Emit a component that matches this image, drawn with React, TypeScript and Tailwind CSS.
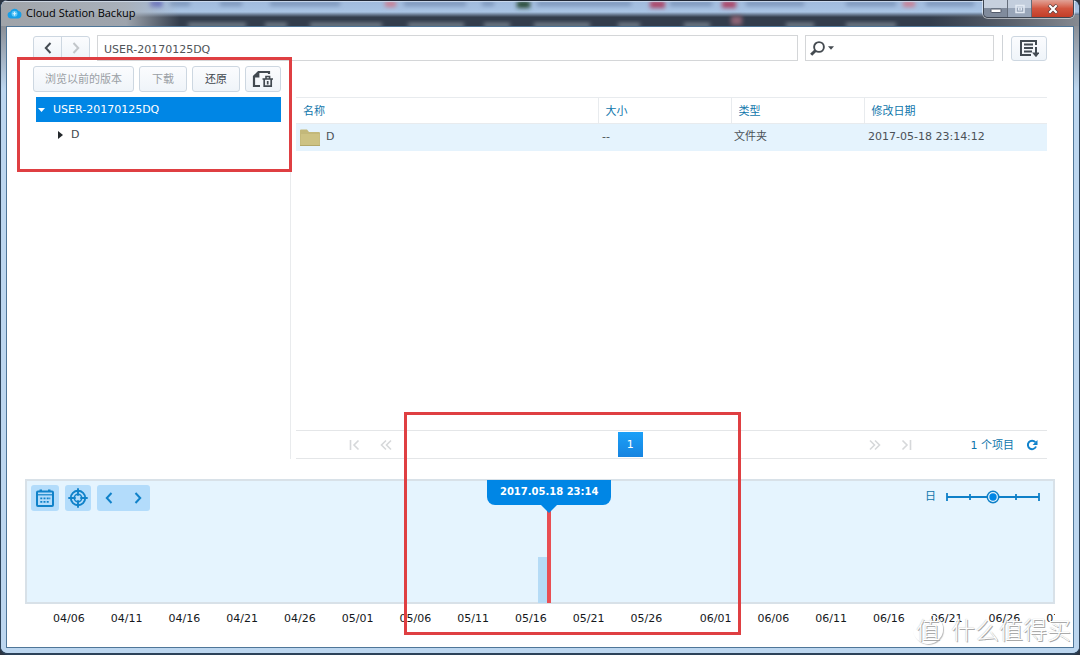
import type { ReactNode } from "react";

const axis = [
  ["04/06", 20], ["04/11", 20], ["04/16", 20], ["04/21", 20], ["04/26", 20],
  ["05/01", 20], ["05/06", 20], ["05/11", 20], ["05/16", 20], ["05/21", 20],
  ["05/26", 24], ["06/01", 20], ["06/06", 20], ["06/11", 20], ["06/16", 20],
  ["06/21", 20], ["06/26", 20], ["07/01", 3],
] as const;

const selectedPercent = 50.9;

function Chevron({ left = false, color }: { left?: boolean; color: string }) {
  return (
    <svg width="8" height="12" viewBox="0 0 8 12" fill="none" stroke={color} strokeWidth="2">
      <path d={left ? "M6.5 1 1.8 6l4.7 5" : "M1.5 1l4.7 5-4.7 5"} />
    </svg>
  );
}

function PagerIcon({ kind }: { kind: "first" | "prev" | "next" | "last" }) {
  const paths = {
    first: "M1.5 1v10M9.5 1.5 5 6l4.5 4.5",
    prev: "M6 1.5 1.5 6 6 10.5M11 1.5 6.5 6l4.5 4.5",
    next: "M1 1.5 5.5 6 1 10.5M6 1.5 10.5 6 6 10.5",
    last: "M2.5 1.5 7 6l-4.5 4.5M10.5 1v10",
  };
  return (
    <svg width="12" height="12" viewBox="0 0 12 12" fill="none" stroke="#d6d8da" strokeWidth="1.6">
      <path d={paths[kind]} />
    </svg>
  );
}

function ToolButton({ children, disabled = false, label }: { children: ReactNode; disabled?: boolean; label?: string }) {
  return (
    <button
      aria-label={label}
      disabled={disabled}
      className="flex h-[26px] min-w-9 items-center justify-center rounded-[3px] border border-[#cdd7e1] bg-linear-to-b from-[#fbfcfe] to-[#eff4f9] text-[#3f464d] disabled:text-[#9a9fa5]"
    >
      {children}
    </button>
  );
}

function TitleBar() {
  return (
    <header className="relative flex h-[26px] shrink-0 items-start overflow-hidden bg-linear-to-b from-[#9fb9dc] from-0% via-[#a9c4e4] via-46% to-[#333d4c] to-66%">
      <svg className="absolute inset-0 h-full w-full" preserveAspectRatio="none" viewBox="0 0 1080 26" aria-hidden="true">
        <defs>
          <filter id="soft" x="-20%" y="-60%" width="140%" height="220%"><feGaussianBlur stdDeviation="2" /></filter>
          <linearGradient id="glassLeft" x1="0" x2="1" y1="0" y2="0">
            <stop offset="0" stopColor="#a0a4a9" />
            <stop offset="0.7" stopColor="#a9afb7" stopOpacity="0.9" />
            <stop offset="1" stopColor="#a9afb7" stopOpacity="0" />
          </linearGradient>
          <linearGradient id="glassRight" x1="0" x2="1" y1="0" y2="0">
            <stop offset="0" stopColor="#70757d" stopOpacity="0" />
            <stop offset="1" stopColor="#878b92" />
          </linearGradient>
        </defs>
        <g filter="url(#soft)" fill="#7d96bb">
          <rect x="170" y="1" width="20" height="5" /><rect x="220" y="1" width="22" height="5" />
          <rect x="270" y="1" width="70" height="5" /><rect x="404" y="1" width="62" height="5" />
          <rect x="482" y="1" width="12" height="5" /><rect x="537" y="1" width="94" height="5" />
          <rect x="670" y="1" width="42" height="5" /><rect x="746" y="1" width="58" height="5" />
          <rect x="846" y="1" width="50" height="5" /><rect x="926" y="1" width="48" height="5" />
          <rect x="150" y="0" width="12" height="7" fill="#4d56c0" />
          <rect x="385" y="1" width="11" height="6" fill="#c98094" />
          <rect x="517" y="1" width="13" height="7" fill="#2c4b39" />
          <rect x="650" y="1" width="15" height="7" fill="#ac4566" />
          <rect x="722" y="1" width="14" height="7" fill="#ac4566" />
          <rect x="903" y="1" width="12" height="6" fill="#c98094" />
          <rect x="731" y="16" width="11" height="9" fill="#8c6475" />
        </g>
        <g filter="url(#soft)" fill="#7d8793">
          <rect x="188" y="23" width="58" height="4" /><rect x="265" y="23" width="22" height="4" />
          <rect x="310" y="23" width="72" height="4" /><rect x="408" y="23" width="56" height="4" />
          <rect x="484" y="23" width="26" height="4" /><rect x="534" y="23" width="56" height="4" />
          <rect x="618" y="23" width="22" height="4" /><rect x="684" y="23" width="26" height="4" />
          <rect x="786" y="23" width="28" height="4" /><rect x="846" y="23" width="50" height="4" />
        </g>
        <rect width="180" height="26" fill="url(#glassLeft)" />
        <rect x="930" y="15" width="150" height="11" fill="url(#glassRight)" />
        <rect width="1080" height="1" fill="#202735" />
        <rect y="1" width="1080" height="1" fill="#dbe7f5" fillOpacity="0.7" />
      </svg>
      <div className="relative flex h-full flex-1 items-center gap-1 pl-[7px]">
        <svg width="15" height="12" viewBox="0 0 14 12" aria-hidden="true">
          <path d="M3.5 11.5a3.4 3.4 0 0 1-.8-6.7A4.6 4.6 0 0 1 11 4a3.8 3.8 0 0 1-.6 7.5Z" fill="#169fe8" />
          <circle cx="7" cy="6.7" r="3" fill="#5cc6f7" />
          <path d="M7 4.8v3.8M5.2 6.7h3.6" stroke="#d9f3ff" />
        </svg>
        <h1 className="font-['Open_Sans','Noto_Sans',sans-serif] text-[11px] leading-4 text-black">Cloud Station Backup</h1>
      </div>
      <div className="relative mr-1.5 flex h-[18px] overflow-hidden rounded-b-[5px] border border-t-0 border-[#3e4652] shadow-[0_0_0_1px_#ffffff80]">
        <button aria-label="Minimize" className="flex w-6 items-center justify-center border-r border-[#646d7b] bg-linear-to-b from-[#c6d0de] from-45% to-[#808b9c] to-50%">
          <svg width="12" height="10" viewBox="0 0 12 10"><rect x="1" y="5" width="10" height="3.5" rx=".5" fill="#fff" stroke="#535b6b" /></svg>
        </button>
        <button aria-label="Maximize" className="flex w-6 items-center justify-center border-r border-[#646d7b] bg-linear-to-b from-[#c3cedd] from-45% to-[#98a5b8] to-50%">
          <svg width="12" height="10" viewBox="0 0 12 10" fill="none" stroke="#e3eaf3" strokeWidth="1.5"><rect x="2" y="1.5" width="8" height="7" /><rect x="4.5" y="4" width="3" height="2" strokeWidth="1" /></svg>
        </button>
        <button aria-label="Close" className="flex w-[41px] items-center justify-center bg-linear-to-b from-[#e0a297] from-0% via-[#d2553f] via-50% to-[#c23d27] to-100%">
          <svg width="12" height="10" viewBox="0 0 12 10"><path d="M2 1l8 8M10 1 2 9" stroke="#5d3a3a" strokeWidth="3.6" /><path d="M2.3 1.3l7.4 7.4M9.7 1.3 2.3 8.7" stroke="#fff" strokeWidth="2.2" /></svg>
        </button>
      </div>
    </header>
  );
}

function NavigationBar() {
  return (
    <div className="flex h-[26px] shrink-0 items-center pl-[26px] pr-[26px]">
      <div className="flex h-6 w-[57px] rounded-[3px] border border-[#cdd7e1] bg-linear-to-b from-[#fbfcfe] to-[#eff4f9]">
        <button aria-label="后退" className="flex flex-1 items-center justify-center border-r border-[#cdd7e1]"><Chevron left color="#454c53" /></button>
        <button aria-label="前进" disabled className="flex flex-1 items-center justify-center"><Chevron color="#c2c6ca" /></button>
      </div>
      <input aria-label="路径" defaultValue="USER-20170125DQ" className="ml-[7px] h-[26px] min-w-0 flex-1 border border-[#d4d6d8] bg-white px-1.5 pt-0.5 text-[#505458] outline-none" />
      <div className="ml-[7px] flex h-[26px] w-[189px] items-center border border-[#d4d6d8] pl-1">
        <button aria-label="搜索选项" className="flex items-center gap-0.5">
          <svg width="16" height="16" viewBox="0 0 16 16" fill="none" stroke="#454b51">
            <circle cx="9" cy="7" r="4.9" strokeWidth="1.9" /><path d="M5.5 10.5 1.2 14.8" strokeWidth="3" />
          </svg>
          <svg width="6" height="4" viewBox="0 0 6 4"><path d="M0 .3h6L3 3.7Z" fill="#454b51" /></svg>
        </button>
        <input aria-label="搜索" className="h-full min-w-0 flex-1 px-1 outline-none" />
      </div>
      <div className="mx-2 h-[26px] w-px bg-[#cfd3d7]" />
      <button aria-label="任务列表" className="flex h-[25px] w-9 items-center justify-center rounded-[3px] border border-[#cdd7e1] bg-linear-to-b from-[#fbfcfe] to-[#eff4f9]">
        <svg width="20" height="19" viewBox="0 0 20 19" fill="none" stroke="#424a52" strokeWidth="2">
          <path d="M12 16H2V2h15v4" /><path d="M5 5.5h9M5 9h9M5 12.5h8" strokeWidth="1.8" />
          <path d="M17 8v7" /><path d="M13 13.5h7.5L17 18.3Z" fill="#424a52" stroke="none" />
        </svg>
      </button>
    </div>
  );
}

function Sidebar() {
  return (
    <aside className="relative w-[284px] shrink-0 border-r border-[#e9ebed] pt-[5px]">
      <div className="flex gap-[5px] pl-[26px]">
        <ToolButton disabled><span className="px-[11px] pt-0.5">浏览以前的版本</span></ToolButton>
        <ToolButton disabled><span className="px-3 pt-0.5">下载</span></ToolButton>
        <ToolButton><span className="px-3 pt-0.5">还原</span></ToolButton>
        <ToolButton label="清理版本">
          <svg width="22" height="18" viewBox="0 0 22 18" fill="none" stroke="#434a51">
            <path d="M8 16H2V6.5L6.5 2H17v2" strokeWidth="2.2" /><path d="M1 7.4 7.4 1v6.4Z" fill="#434a51" stroke="none" />
            <path d="M10.5 9H21M14 8.5V6.5h3.6v2" strokeWidth="1.6" /><path d="M12.2 9v7.1h7V9M15.7 11v3.5" strokeWidth="1.7" />
          </svg>
        </ToolButton>
      </div>
      <ul className="mt-[5px] ml-[29px] mr-[9px] leading-[25px]">
        <li>
          <button className="flex h-[25px] w-full items-center gap-2 bg-[#0086e5] pl-0.5 text-white">
            <svg width="7" height="4" viewBox="0 0 7 4"><path d="M0 0h7L3.5 4Z" fill="#fff" /></svg>USER-20170125DQ
          </button>
          <ul>
            <li>
              <button className="flex h-[25px] w-full items-center gap-2 pl-[22px] text-[#42474d]">
                <svg width="5" height="8" viewBox="0 0 5 8"><path d="M0 0l5 4-5 4Z" fill="#24282c" /></svg>D
              </button>
            </li>
          </ul>
        </li>
      </ul>
      <div className="pointer-events-none absolute -top-1 left-[10px] -right-0.5 h-[115px] border-3 border-[#df3f42]" />
    </aside>
  );
}

function FileList() {
  return (
    <main className="ml-[5px] mr-[26px] flex min-w-0 flex-1 flex-col pt-9">
      <table className="w-full table-fixed border-collapse text-left">
        <colgroup><col /><col className="w-[133px]" /><col className="w-[133px]" /><col className="w-[183px]" /></colgroup>
        <thead>
          <tr className="h-[26px] border-y border-[#e8ebee] leading-4 text-[#0f76ab]">
            <th className="pt-0.5 pl-[7px] font-normal">名称</th>
            <th className="border-l border-[#e8ebee] pt-0.5 pl-[7px] font-normal">大小</th>
            <th className="border-l border-[#e8ebee] pt-0.5 pl-[7px] font-normal">类型</th>
            <th className="border-l border-[#e8ebee] pt-0.5 pl-[7px] font-normal">修改日期</th>
          </tr>
        </thead>
        <tbody>
          <tr className="h-[27px] bg-[#e5f3fd] text-[#4b5157]">
            <td className="pl-1">
              <span className="flex items-center gap-1.5">
                <svg width="20" height="17" viewBox="0 0 20 17" aria-hidden="true">
                  <path d="M0 1.5Q0 .5 1 .5h6L9 3h10q1 0 1 1v12H0Z" fill="#c3b87a" />
                  <path d="M1 5h18.5v11.5H.5Z" fill="#cdc283" /><path d="M0 16h20v1H0Z" fill="#b3a869" />
                </svg>
                D
              </span>
            </td>
            <td className="pl-1">--</td>
            <td className="pl-[3px]">文件夹</td>
            <td className="pl-1">2017-05-18 23:14:12</td>
          </tr>
        </tbody>
      </table>
      <nav aria-label="分页" className="mt-auto flex h-[29px] items-center border-y border-[#e4e6e8] pl-[53px] pr-[9px]">
        <div className="flex flex-1 gap-[19px]">
          <button aria-label="第一页" disabled><PagerIcon kind="first" /></button>
          <button aria-label="上一页" disabled><PagerIcon kind="prev" /></button>
        </div>
        <button className="h-[25px] w-[25px] bg-linear-to-b from-[#1ba0f8] to-[#1784e0] pt-0.5 text-white">1</button>
        <div className="flex flex-1 justify-end gap-[19px]">
          <button aria-label="下一页" disabled><PagerIcon kind="next" /></button>
          <button aria-label="最后一页" disabled><PagerIcon kind="last" /></button>
        </div>
        <span className="ml-[59px] pt-0.5 leading-4 text-[#0f76ab]">1 个项目</span>
        <button aria-label="刷新" className="ml-3">
          <svg width="12" height="12" viewBox="0 0 12 12" fill="none">
            <path d="M9.3 3.2A4.2 4.2 0 1 0 10 7.5" stroke="#0f82cc" strokeWidth="2" /><path d="M11.5 1v5H6.6Z" fill="#0f82cc" />
          </svg>
        </button>
      </nav>
    </main>
  );
}

function Timeline() {
  return (
    <section aria-label="时间轴" className="mx-[18px] mt-5 shrink-0">
      <div className="relative flex h-[125px] items-start border-2 border-[#d8e1e8] bg-[#e5f4fe] px-1 pt-1">
        <button aria-label="日历" className="flex h-[26px] w-7 items-center justify-center rounded-[3px] bg-[#b3dcfb]">
          <svg width="18" height="18" viewBox="0 0 18 18" fill="none" stroke="#1082c9">
            <rect x="1" y="2.5" width="16" height="14.5" rx="1" strokeWidth="2" /><path d="M1 5.8h16" strokeWidth="1.2" />
            <path d="M3.5 1.7h2.5M12 1.7h2.5" strokeWidth="2.6" />
            <path d="M7.5 9.3h2M10.7 9.3h2M13.3 9.3h1M4.3 12.8h2M7.5 12.8h2M4.3 9.3h2M10.7 12.8h2" strokeWidth="1.8" />
          </svg>
        </button>
        <button aria-label="定位" className="ml-1.5 flex h-[26px] w-[26px] items-center justify-center rounded-[3px] bg-[#b3dcfb]">
          <svg width="20" height="20" viewBox="0 0 20 20" fill="none" stroke="#1082c9" strokeWidth="1.9">
            <circle cx="10" cy="10" r="7.2" /><circle cx="10" cy="10" r="3.7" strokeWidth="1.5" />
            <path d="M10 .3v7.4M10 12.3v7.4M.3 10h7.4M12.3 10h7.4" />
          </svg>
        </button>
        <div className="ml-1.5 flex h-[26px] w-[53px] rounded-[3px] bg-[#b3dcfb]">
          <button aria-label="较早" className="flex flex-1 items-center justify-start pl-2"><Chevron left color="#1082c9" /></button>
          <button aria-label="较晚" className="flex flex-1 items-center justify-end pr-2"><Chevron color="#1082c9" /></button>
        </div>
        <label className="mr-[7px] ml-auto flex h-6 items-center gap-2 text-[#0f76ab]">
          日
          <span className="relative flex">
            <svg width="98" height="14" viewBox="0 0 98 14" fill="none" stroke="#0f80c8" aria-hidden="true">
              <path d="M3 7h92" strokeWidth="2" /><path d="M3 3v8M26 4v6M72 4v6M95 3v8" strokeWidth="1.8" />
              <circle cx="49" cy="7" r="5.7" fill="#e5f4fe" strokeWidth="1.5" /><circle cx="49" cy="7" r="3.7" fill="#0086e5" stroke="none" />
            </svg>
            <input type="range" min="0" max="4" defaultValue="2" className="absolute inset-0 h-full w-full opacity-0" />
          </span>
        </label>
        <div className="absolute -top-px -bottom-px flex w-[124px] -translate-x-1/2 flex-col items-center" style={{ left: `${selectedPercent}%` }}>
          <div className="relative z-10 h-[25px] w-full rounded-b-lg bg-[#0086e5] text-center text-[10px] leading-6 font-bold text-white">2017.05.18 23:14</div>
          <svg className="relative z-10 shrink-0" width="16" height="8" viewBox="0 0 16 8"><path d="M0 0h16L8 8Z" fill="#0086e5" /></svg>
          <div className="relative -mt-1 w-1 flex-1 bg-[#e94e53]">
            <div className="absolute right-full bottom-0 h-[46px] w-[9px] bg-[#b5dbf6]" />
          </div>
        </div>
      </div>
      <div className="flex h-[43px] overflow-hidden pl-7 text-[#15181b]">
        {axis.map(([label, span]) => (
          <span key={label} className={span === 3 ? "min-w-0 overflow-hidden pt-[7px] leading-4" : "min-w-0 pt-[7px] leading-4"} style={{ flex: `${span} 1 0%` }}>{label}</span>
        ))}
      </div>
    </section>
  );
}

export default function App() {
  return (
    <div className="flex min-h-screen bg-[#2b3442] font-['DejaVu_Sans','Noto_Sans_CJK_SC',sans-serif] text-[11px]">
      <div className="relative flex min-w-0 flex-1 flex-col overflow-hidden rounded-lg border-x border-b-2 border-[#2c4259] bg-[#bcd6ef]">
        <div className="-mx-px shrink-0"><TitleBar /></div>
        <div className="flex flex-1 flex-col bg-linear-to-b from-[#8b8f96] via-[#bcd6ef] via-10% to-[#bcd6ef] px-[5px] pb-[5px]">
          <div className="flex flex-1 flex-col border border-[#4f7698] bg-white pt-2">
            <NavigationBar />
            <div className="flex flex-1">
              <Sidebar />
              <FileList />
            </div>
            <Timeline />
          </div>
        </div>
        <div className="pointer-events-none absolute bottom-[18px] left-[403px] h-[223px] w-[337px] border-3 border-[#df3f42]" />
        <div className="pointer-events-none absolute right-2 bottom-2 flex items-center gap-2 font-['Noto_Sans_CJK_SC',sans-serif] text-[24px] leading-8 font-light text-white [text-shadow:1px_1px_0_#aaa,0_0_1px_#aaa]">
          <span className="flex h-[30px] w-[30px] items-center justify-center rounded-full border border-white shadow-[1px_1px_1px_#bbb]">值</span>
          <span>什么值得买</span>
        </div>
      </div>
    </div>
  );
}
